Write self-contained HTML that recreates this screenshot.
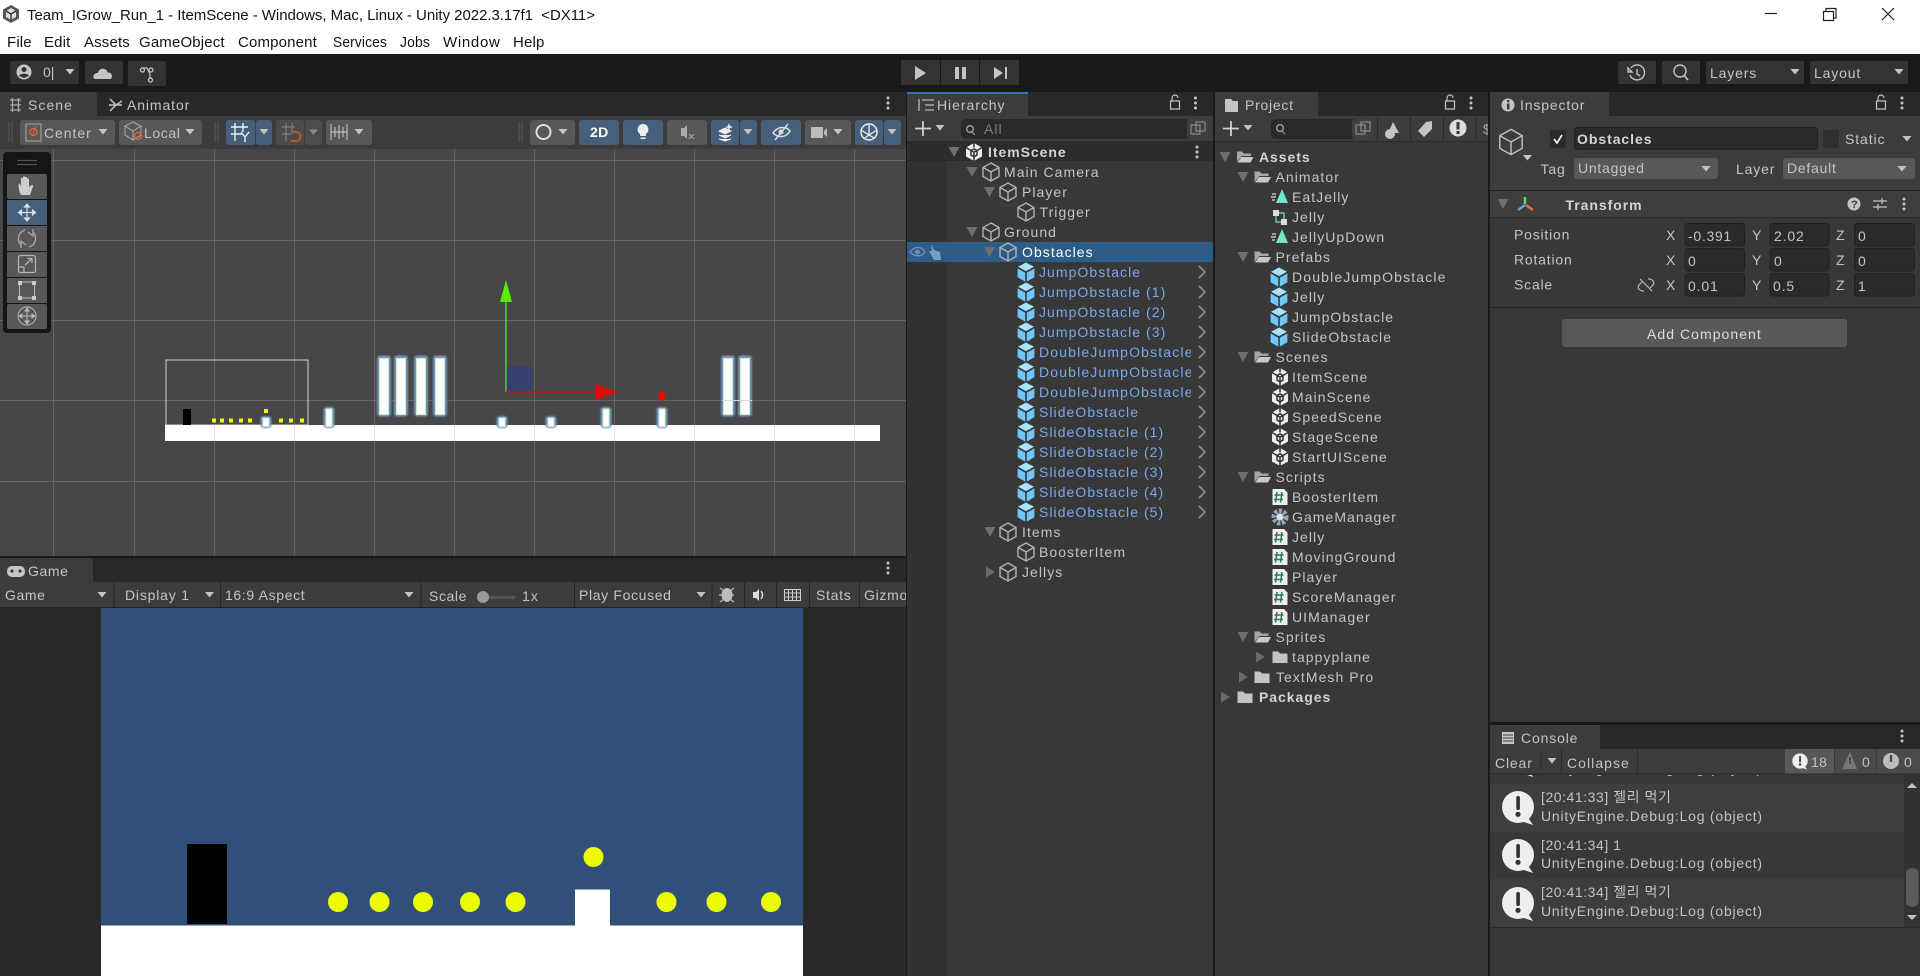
<!DOCTYPE html>
<html><head><meta charset="utf-8"><title>Unity</title>
<style>
html,body{margin:0;padding:0;background:#191919;overflow:hidden;width:1920px;height:976px}
svg{display:block}
text{font-family:"Liberation Sans","Noto Sans CJK KR",sans-serif;font-size:14px;letter-spacing:1.05px;fill:#c4c4c4;white-space:pre}
.b{font-weight:700;fill:#d4d4d4;letter-spacing:.95px}
.p{fill:#7ba7ee}
.w{fill:#fff}
.m{fill:#111;font-size:15px;letter-spacing:.15px}
.k{fill:#111;font-size:15px;letter-spacing:0}
.s{fill:#aaa}
.bn{fill:#585858}
.bl{fill:#46607c}
.sep{stroke:#2a2a2a;stroke-width:1}
.f{fill:#2a2a2a;stroke:#212121}
</style></head><body>
<svg width="1920" height="976" viewBox="0 0 1920 976" xmlns="http://www.w3.org/2000/svg">
<defs>
<path id="td" d="M-5.5-5H5.5L0 5Z" fill="#6f6f6f"/>
<path id="tr" d="M-4-5.5L5 0L-4 5.5Z" fill="#6a6a6a"/>
<path id="dd" d="M-4.5-3H4.5L0 2.5Z" fill="#c4c4c4"/>
<path id="cube" d="M0-9L8-4.5V4.5L0 9L-8 4.5V-4.5ZM-8-4.5L0 0L8-4.5M0 0V9" fill="none" stroke="#b4b4b4" stroke-width="1.4"/>
<g id="pc"><path d="M0-9.5L8-5.2L0-.9L-8-5.2Z" fill="#a9e2ff"/><path d="M-8.4-3.6L-.8.7V9.6L-8.4 5.3Z" fill="#6fc7fb"/><path d="M8.4-3.6L.8.7V9.6L8.4 5.3Z" fill="#6fc7fb"/></g>
<g id="sc"><path d="M0-9L8-4.5V4.5L0 9L-8 4.5V-4.5Z" fill="#ededed"/><path d="M-8-4.5L-3-1.5V3L0 5L3 3V-1.5L8-4.5M0-9V-4.5M-3-1.5L0-3.2L3-1.5L0 .2ZM0 .2V5M0 5V9" fill="none" stroke="#333" stroke-width="1.5"/></g>
<g id="fo"><path d="M-8-5.5H-3L-1-3.5H6V-1H-3L-8 5Z" fill="#a6a6a6"/><path d="M-3.5 0H8.5L5.5 5.5H-7.5Z" fill="#c8c8c8"/></g>
<path id="fc" d="M-7.5-5.5H-2L0-3.5H7.5V6H-7.5Z" fill="#c4c4c4"/>
<g id="sr"><path d="M-7.5-8H4L7.5-4.5V8H-7.5Z" fill="#eee"/><path d="M-3-5L-4.5 5.5M2-5L.5 5.5M-5.5-2H3.5M-6 2.5H3" stroke="#2d7d4a" stroke-width="1.5" fill="none"/></g>
<g id="an"><path d="M2-8L8 6H-4Z" fill="#6fe6cf"/><path d="M-8-3H-4M-9 0H-4M-8 3H-5" stroke="#ddd" stroke-width="1.2"/></g>
<g id="dk"><circle cy="-5" r="1.5" fill="#c4c4c4"/><circle r="1.5" fill="#c4c4c4"/><circle cy="5" r="1.5" fill="#c4c4c4"/></g>
<path id="lk" d="M-4.5-1V7H4.5V-1ZM-3-1V-4A3 3 0 0 1 3-4" fill="none" stroke="#c4c4c4" stroke-width="1.2"/>
<path id="gt" d="M-3-6L3 0L-3 6" fill="none" stroke="#8c8c8c" stroke-width="1.7"/>
<g id="bub"><circle r="16" fill="#eee"/><path d="M9 9L15 18L3 14Z" fill="#eee"/><rect x="-1.7" y="-11" width="3.6" height="14" rx="1.6" fill="#333"/><circle cy="7.3" r="2.6" fill="#333"/></g>
<clipPath id="hc"><rect x="1030" y="340" width="161" height="62"/></clipPath>
<clipPath id="gc"><rect x="0" y="582" width="906" height="26"/></clipPath>
<clipPath id="pc2"><rect x="1214" y="116" width="274" height="25"/></clipPath>
<clipPath id="cc"><rect x="1490" y="775" width="414" height="9"/></clipPath>
<filter id="gl" x="-40%" y="-20%" width="180%" height="140%"><feGaussianBlur stdDeviation=".7"/></filter>
</defs>

<!-- title -->
<rect width="1920" height="54" fill="#fff"/>
<g transform="translate(11,14)"><path d="M0-9L8-4.5V4.5L0 9L-8 4.5V-4.5Z" fill="#555"/><path d="M0-6L5-3V3L0 6L-5 3V-3Z" fill="#ddd"/><path d="M-5-3L0 0L5-3M0 0V6" stroke="#333" stroke-width="1.4" fill="none"/></g>
<text class="k" x="27" y="20" textLength="568" lengthAdjust="spacing">Team_IGrow_Run_1 - ItemScene - Windows, Mac, Linux - Unity 2022.3.17f1  &lt;DX11&gt;</text>
<text class="m" x="7" y="47">File</text><text class="m" x="44" y="47">Edit</text><text class="m" x="84" y="47">Assets</text><text class="m" x="139" y="47">GameObject</text><text class="m" x="238" y="47">Component</text><text class="m" x="333" y="47" textLength="54" lengthAdjust="spacingAndGlyphs">Services</text><text class="m" x="400" y="47" textLength="30" lengthAdjust="spacingAndGlyphs">Jobs</text><text class="m" x="443" y="47" textLength="57" lengthAdjust="spacing">Window</text><text class="m" x="513" y="47">Help</text>
<path d="M1765 13.5H1777" stroke="#222" stroke-width="1.2"/>
<path d="M1823.500 11.500H1833.500V20.500H1823.500ZM1826 11V8.500H1836V18H1834" fill="none" stroke="#222" stroke-width="1.2"/>
<path d="M1882 8L1894 20M1894 8L1882 20" stroke="#222" stroke-width="1.2"/>

<!-- top toolbar -->
<rect y="54" width="1920" height="38" fill="#191919"/>
<rect x="10" y="61" width="69" height="23" rx="2" fill="#333"/>
<circle cx="24" cy="72" r="7.500" fill="#c4c4c4"/><circle cx="24" cy="69.500" r="2.500" fill="#333"/><path d="M19 76C20 73 28 73 29 76L24 78Z" fill="#333"/>
<text x="43" y="77" style="letter-spacing:0">0|</text><use href="#dd" x="70" y="72"/>
<rect x="85" y="61" width="38" height="23" rx="2" fill="#333"/>
<path d="M96 79C91 79 94 72 98 73C99 67 107 68 107.500 72.500C113 72 113 79 110 79Z" fill="#c4c4c4"/>
<rect x="128" y="61" width="38" height="25" rx="2" fill="#333"/>
<path d="M141 68H147L150 74V79M142.500 68A2 2 0 1 1 142.400 68M151 68A2 2 0 1 1 150.900 68M150.500 78A2 2 0 1 1 150.400 78" fill="none" stroke="#c4c4c4" stroke-width="1.2"/>
<rect x="901" y="60" width="39" height="25" fill="#333"/><rect x="941" y="60" width="38" height="25" fill="#333"/><rect x="980" y="60" width="39" height="25" fill="#333"/>
<path d="M915 66L926 73L915 80Z" fill="#c4c4c4"/>
<path d="M955 67H959V79H955ZM962 67H966V79H962Z" fill="#c4c4c4"/>
<path d="M994 67L1003 73L994 79ZM1005 67H1007V79H1005Z" fill="#c4c4c4"/>
<rect x="1618" y="61" width="38" height="23" rx="2" fill="#333"/>
<path d="M1631 68A7.500 7.500 0 1 1 1630 75M1628 68L1632 72H1628ZM1637 69V74L1640 76" fill="none" stroke="#c4c4c4" stroke-width="1.4"/>
<rect x="1662" y="61" width="38" height="23" rx="2" fill="#333"/>
<circle cx="1680" cy="71" r="6" fill="none" stroke="#c4c4c4" stroke-width="1.4"/><path d="M1684 75L1688 80" stroke="#c4c4c4" stroke-width="1.6"/>
<rect x="1706" y="61" width="98" height="23" rx="2" fill="#333"/><text x="1710" y="78" style="letter-spacing:.85px">Layers</text><use href="#dd" x="1795" y="72"/>
<rect x="1810" y="61" width="98" height="23" rx="2" fill="#333"/><text x="1814" y="78" style="letter-spacing:.85px">Layout</text><use href="#dd" x="1899" y="72"/>

<!-- scene panel -->
<rect y="92" width="906" height="24" fill="#282828"/>
<path d="M0 116V92H94Q97 92 97 95V116Z" fill="#3c3c3c"/>
<path d="M10 100H21M10 105H21M10 110H21M12.500 98V112M18.500 98V112" stroke="#aaa" stroke-width="1.2"/>
<text x="28" y="110">Scene</text>
<path d="M110 99L116 105L110 111M109 105H122M116 105L122 101" fill="none" stroke="#c4c4c4" stroke-width="1.5"/>
<text x="127" y="110" style="letter-spacing:.9px">Animator</text>
<use href="#dk" x="888" y="103"/>
<rect y="116" width="906" height="33" fill="#3c3c3c"/>
<path d="M9 122V142M12 122V142M215 122V142M218 122V142M519 122V142M522 122V142" stroke="#555" stroke-width="1.200"/>
<rect x="20" y="120" width="95" height="25" rx="3" class="bn"/>
<rect x="26" y="124" width="15" height="17" fill="none" stroke="#aaa"/><circle cx="33.500" cy="132" r="3.500" fill="none" stroke="#e0603a" stroke-width="1.500"/><path d="M36 126L32 136" stroke="#e0603a"/>
<text x="44" y="138" style="letter-spacing:.95px">Center</text><use href="#dd" x="103" y="132"/>
<rect x="119" y="120" width="83" height="25" rx="3" class="bn"/>
<path d="M133 122L141 126V135L133 140L125 135V126ZM125 126L133 131L141 126M133 131V140" fill="none" stroke="#aaa"/><circle cx="138" cy="136" r="3.500" fill="none" stroke="#e0603a" stroke-width="1.500"/>
<text x="144" y="138" style="letter-spacing:.6px">Local</text><use href="#dd" x="190" y="132"/>
<rect x="226" y="120" width="29" height="25" rx="3" class="bl"/><rect x="256" y="120" width="16" height="25" rx="3" class="bl"/>
<path d="M231 127H248M231 134H243M235 123V141M243 123V132M241 132L245 137L249 132M245 137V142" fill="none" stroke="#eee" stroke-width="1.400"/><use href="#dd" x="264" y="132"/>
<rect x="276" y="120" width="28" height="25" rx="3" fill="#4c4c4c"/><rect x="305" y="120" width="17" height="25" rx="3" fill="#4c4c4c"/>
<path d="M282 127H295M282 134H292M286 123V141M292 123V132" fill="none" stroke="#888"/><path d="M292 132H296A4 4 0 0 1 296 141H291" fill="none" stroke="#b5552d" stroke-width="2"/><path d="M309 129.500H318L313.500 135Z" fill="#888"/>
<rect x="326" y="120" width="46" height="25" rx="3" class="bn"/>
<path d="M331 124V140M347 124V140M331 132H347M335 127V137M339 125V139M343 127V137" fill="none" stroke="#ccc"/><use href="#dd" x="359" y="132"/>
<rect x="530" y="120" width="45" height="25" rx="3" class="bn"/><circle cx="543.500" cy="132" r="7" fill="none" stroke="#ddd" stroke-width="2"/><use href="#dd" x="563" y="132"/>
<rect x="579" y="120" width="40" height="25" rx="3" class="bl"/><text class="w" x="590" y="137" style="font-weight:700;letter-spacing:.3px">2D</text>
<rect x="623" y="120" width="40" height="25" rx="3" class="bl"/><path d="M643 124A5.500 5.500 0 0 1 646 134V136H640V134A5.500 5.500 0 0 1 643 124ZM640.500 137.500H645.500V139H640.500Z" fill="#eee"/>
<rect x="667" y="120" width="40" height="25" rx="3" class="bn"/><path d="M681 128H684L687 125V139L684 136H681Z" fill="#aaa"/><path d="M689 134L694 139M694 134L689 139" stroke="#aaa"/>
<rect x="711" y="120" width="28" height="25" rx="3" class="bl"/><rect x="740" y="120" width="17" height="25" rx="3" class="bl"/>
<path d="M719 131L725 134L731 131L725 128ZM719 135L725 138L731 135M719 139L725 141L731 139" fill="#eee" stroke="#eee"/><path d="M729 123L730 126L733 127L730 128L729 131L728 128L725 127L728 126Z" fill="#eee"/><use href="#dd" x="748" y="132"/>
<rect x="761" y="120" width="40" height="25" rx="3" class="bl"/><path d="M773 133C778 126 786 126 790 131C786 138 778 138 773 133ZM775 140L788 124" fill="none" stroke="#ddd" stroke-width="1.500"/><circle cx="781" cy="132" r="2.500" fill="#ddd"/>
<rect x="805" y="120" width="46" height="25" rx="3" class="bn"/><path d="M811 127H823V138H811ZM824 131L827 128V137L824 134Z" fill="#bbb"/><use href="#dd" x="838" y="132"/>
<rect x="855" y="120" width="28" height="25" rx="3" class="bl"/><rect x="884" y="120" width="17" height="25" rx="3" class="bl"/>
<circle cx="869" cy="132" r="8" fill="none" stroke="#eee" stroke-width="1.500"/><path d="M861 130L869 135L877 130M869 124V135M865 138L869 135L874 138" fill="none" stroke="#eee" stroke-width="1.300"/><use href="#dd" x="892" y="132"/>

<!-- scene view -->
<rect y="149" width="906" height="407" fill="#474747"/>
<path d="M53.500 149V556M134.500 149V556M214.500 149V556M294.500 149V556M374.500 149V556M454.500 149V556M534.500 149V556M614.500 149V556M694.500 149V556M774.500 149V556M854.500 149V556M0 160.500H906M0 240.500H906M0 320.500H906M0 400.500H906M0 481.500H906" stroke="#646464"/>
<rect x="166" y="360" width="142" height="65" fill="none" stroke="#d2d2d2"/>
<rect x="165" y="425" width="715" height="16" fill="#fff"/>
<path d="M214.500 425V441M294.500 425V441M374.500 425V441M454.500 425V441M534.500 425V441M614.500 425V441M694.500 425V441M774.500 425V441M854.500 425V441" stroke="#e2e2e2"/>
<rect x="183" y="409" width="8" height="16" fill="#000"/>
<g fill="#f5f500"><rect x="212" y="418.500" width="4" height="4"/><rect x="220" y="418.500" width="4" height="4"/><rect x="229" y="418.500" width="4" height="4"/><rect x="239" y="418.500" width="4" height="4"/><rect x="248" y="418.500" width="4" height="4"/><rect x="264" y="409" width="4" height="4"/><rect x="279" y="418.500" width="4" height="4"/><rect x="289" y="418.500" width="4" height="4"/><rect x="300" y="418.500" width="4" height="4"/></g>
<g fill="#6f94bd" filter="url(#gl)">
<rect x="377" y="355.500" width="14" height="61" rx="3"/><rect x="394" y="355.500" width="14" height="61" rx="3"/><rect x="414" y="355.500" width="14" height="61" rx="3"/><rect x="433" y="355.500" width="14" height="61" rx="3"/><rect x="721" y="355.500" width="14" height="61" rx="3"/><rect x="738" y="355.500" width="14" height="61" rx="3"/>
<rect x="260.500" y="416" width="11" height="12" rx="3"/><rect x="496.500" y="416" width="11" height="12" rx="3"/><rect x="545.500" y="416" width="11" height="12" rx="3"/>
<rect x="323.500" y="407" width="11" height="21" rx="3"/><rect x="600.500" y="407" width="11" height="21" rx="3"/><rect x="656.500" y="407" width="11" height="21" rx="3"/>
</g>
<g fill="#fff" stroke="#cdeccb">
<rect x="379.500" y="358.500" width="9" height="56"/><rect x="396.500" y="358.500" width="9" height="56"/><rect x="416.500" y="358.500" width="9" height="56"/><rect x="435.500" y="358.500" width="9" height="56"/><rect x="723.500" y="358.500" width="9" height="56"/><rect x="740.500" y="358.500" width="9" height="56"/>
<rect x="263" y="418" width="6" height="8.500"/><rect x="499" y="418" width="6" height="8.500"/><rect x="548" y="418" width="6" height="8.500"/>
<rect x="326" y="409" width="6" height="17.500"/><rect x="603" y="409" width="6" height="17.500"/><rect x="659" y="409" width="6" height="17.500"/>
</g>
<path d="M722 400.500H752" stroke="#d8d8d8"/>
<rect x="507" y="367" width="24" height="25" fill="#3b3f6e" stroke="#2a3a9a"/>
<path d="M506 300V392" stroke="#4fd60f" stroke-width="1.500"/><path d="M506 280L500 302H512Z" fill="#55f000"/>
<path d="M506 392H598" stroke="#a32020" stroke-width="2"/><path d="M596 384L618 392L596 400Z" fill="#d80e0e"/>
<ellipse cx="662" cy="396" rx="3.500" ry="4.500" fill="#f00"/>

<!-- tool palette -->
<rect x="3" y="152" width="48" height="181" rx="4" fill="#151515"/>
<path d="M17 160.500H37M17 164.500H37" stroke="#555" stroke-width="1.300"/>
<rect x="7" y="174" width="40" height="25" rx="2" class="bn"/>
<rect x="7" y="200" width="40" height="25" fill="#46607c"/>
<rect x="7" y="226" width="40" height="25" class="bn"/>
<rect x="7" y="252" width="40" height="25" class="bn"/>
<rect x="7" y="278" width="40" height="25" class="bn"/>
<rect x="7" y="304" width="40" height="25" rx="2" class="bn"/>
<path d="M21 195C18 190 19 186 18.500 184L19.500 183.500L21 186V178L23 178V185V176.500L25 176.500V185V177L27 177V185V178.500L29 178.500V187C33 184 33.500 185 33 186.500L30 195Z" fill="#ccc"/>
<path d="M27 204V221M18.500 212.500H35.500M27 204L24.500 207H29.500ZM27 221L24.500 218H29.500ZM18.500 212.500L21.500 210V215ZM35.500 212.500L32.500 210V215Z" fill="#ddd" stroke="#ddd" stroke-width="1.200"/>
<path d="M21 245A9 9 0 0 1 25 230M33 232A9 9 0 0 1 29 247M33 229L33 236L28 232M21 248L21 241L26 245" fill="none" stroke="#aaa" stroke-width="1.300"/>
<rect x="18.500" y="255.500" width="17" height="17" rx="2" fill="none" stroke="#b5b5b5" stroke-width="1.200"/><path d="M18.500 267H24V272.500M25 265L32 258.500M27.500 258.500H32V263" fill="none" stroke="#b5b5b5" stroke-width="1.200"/>
<path d="M19.500 282H34.500V298H19.500Z" fill="none" stroke="#bbb"/><g fill="#ccc"><rect x="18" y="281" width="4" height="4"/><rect x="32" y="281" width="4" height="4"/><rect x="18" y="296" width="4" height="4"/><rect x="32" y="296" width="4" height="4"/></g>
<circle cx="27" cy="316" r="9" fill="none" stroke="#aaa" stroke-width="1.200"/><path d="M27 308V324M19 316H35M27 308L25 311H29ZM27 324L25 321H29ZM19 316L22 314V318ZM35 316L32 314V318Z" fill="#bbb" stroke="#bbb"/>

<!-- game panel -->
<rect y="558" width="906" height="24" fill="#282828"/>
<path d="M0 582V558H90Q93 558 93 561V582Z" fill="#3c3c3c"/>
<rect x="7" y="566" width="18" height="11" rx="5" fill="#c4c4c4"/><circle cx="12" cy="571" r="1.600" fill="#3c3c3c"/><circle cx="20" cy="571" r="1.600" fill="#3c3c3c"/>
<text x="28" y="576" style="letter-spacing:.6px">Game</text>
<use href="#dk" x="888" y="568"/>
<rect y="582" width="906" height="26" fill="#3c3c3c"/>
<path d="M114 582V608M220.500 582V608M421 582V608M574.500 582V608M712 582V608M744.500 582V608M776.500 582V608M809.500 582V608M859.500 582V608M0 607.500H906" stroke="#252525"/>
<g clip-path="url(#gc)">
<text x="5" y="600" style="letter-spacing:.6px">Game</text><use href="#dd" x="102" y="595"/>
<text x="125" y="600" style="letter-spacing:.8px">Display 1</text><use href="#dd" x="209.500" y="595"/>
<text x="225" y="600" style="letter-spacing:.65px">16:9 Aspect</text><use href="#dd" x="409" y="595"/>
<text x="429" y="601" style="letter-spacing:.6px">Scale</text><rect x="483" y="596" width="32" height="3" fill="#555"/><circle cx="483" cy="597" r="6" fill="#999"/><text x="522" y="601">1x</text>
<text x="579" y="600" style="letter-spacing:.65px">Play Focused</text><use href="#dd" x="701" y="595"/>
<ellipse cx="727" cy="595" rx="5.500" ry="7" fill="#bbb"/><path d="M720 588L724 591M734 588L730 591M719 595H734M720 602L724 599M734 602L730 599" stroke="#bbb" stroke-width="1.200" fill="none"/>
<path d="M753 592H756L759 589V601L756 598H753Z" fill="#ddd"/><path d="M761 591A6 6 0 0 1 761 599" fill="none" stroke="#ddd" stroke-width="1.400"/>
<path d="M784.500 589.500H800.500V600.500H784.500ZM784.500 593H800.500M784.500 597H800.500M788.500 589.500V600.500M792.500 589.500V600.500M796.500 589.500V600.500" fill="none" stroke="#ccc"/>
<text x="816" y="600" style="letter-spacing:.7px">Stats</text><text x="864" y="600" style="letter-spacing:.7px">Gizmos</text>
</g>
<rect y="608" width="906" height="368" fill="#282828"/>
<rect x="101" y="608" width="702" height="368" fill="#304f79"/>
<rect x="101" y="925" width="702" height="51" fill="#fff"/><rect x="101" y="925" width="702" height="1" fill="#92a3bd"/>
<rect x="187" y="844" width="40" height="80" fill="#000"/>
<rect x="575" y="889" width="35" height="37" fill="#fff"/><rect x="575" y="889" width="35" height="1" fill="#92a3bd"/>
<g fill="#ebff00"><circle cx="338" cy="902" r="10"/><circle cx="379.500" cy="902" r="10"/><circle cx="423" cy="902" r="10"/><circle cx="470" cy="902" r="10"/><circle cx="515.500" cy="902" r="10"/><circle cx="666.500" cy="902" r="10"/><circle cx="716.500" cy="902" r="10"/><circle cx="771" cy="902" r="10"/><circle cx="593.500" cy="857" r="10"/></g>

<!-- hierarchy -->
<rect x="907" y="92" width="306" height="884" fill="#383838"/>
<rect x="907" y="92" width="306" height="24" fill="#282828"/>
<rect x="907" y="92" width="121" height="24" fill="#3c3c3c"/><rect x="907" y="92" width="121" height="2" fill="#3a72b0"/>
<path d="M922 100H934M925 105H934M925 110H934M919 99V111" stroke="#bbb" stroke-width="1.300" fill="none"/>
<text x="937" y="110" style="letter-spacing:.95px">Hierarchy</text>
<use href="#lk" x="1175" y="102"/><use href="#dk" x="1195.500" y="103"/>
<rect x="907" y="116" width="306" height="25" fill="#3c3c3c"/>
<path d="M923 121V136M915 128.500H931" stroke="#d0d0d0" stroke-width="1.800"/><use href="#dd" x="940" y="128"/>
<rect x="961" y="119" width="247" height="20" rx="5" fill="#2a2a2a"/>
<rect x="1187" y="119" width="21" height="20" rx="3" fill="#3f3f3f"/>
<rect x="1191" y="125" width="9" height="9" fill="none" stroke="#999"/><rect x="1196" y="122" width="9" height="9" fill="none" stroke="#999"/>
<circle cx="970" cy="129" r="3.300" fill="none" stroke="#aaa" stroke-width="1.300"/><path d="M972 132L975 135" stroke="#aaa"/>
<text class="s" x="984" y="134" style="fill:#7f7f7f">All</text>
<rect x="907" y="141" width="40" height="835" fill="#323232"/>
<rect x="907" y="141" width="306" height="20" fill="#2c2c2c"/>
<use href="#td" x="954" y="152"/><use href="#sc" x="974" y="152"/>
<text class="b" x="988" y="157">ItemScene</text><use href="#dk" x="1197" y="152"/>
<use href="#td" x="972" y="172"/><use href="#cube" x="991" y="172"/><text x="1004" y="177">Main Camera</text>
<use href="#td" x="989.500" y="192"/><use href="#cube" x="1008" y="192"/><text x="1022" y="197">Player</text>
<use href="#cube" x="1026" y="212"/><text x="1039.500" y="217">Trigger</text>
<use href="#td" x="972" y="232"/><use href="#cube" x="991" y="232"/><text x="1004" y="237">Ground</text>
<rect x="907" y="242" width="306" height="20" fill="#2c5d87"/>
<path d="M910 252C914 246 922 246 925 252C922 257 914 257 910 252Z" fill="none" stroke="#6c8eb0" stroke-width="1.500"/><circle cx="917.500" cy="252" r="2.500" fill="#6c8eb0"/>
<path d="M931 244L934 250L940 252L941 260H934L929 251L932 251Z" fill="#7d9cbc"/>
<use href="#td" x="989.500" y="252"/><use href="#cube" x="1008" y="252"/><text class="w" x="1022" y="257">Obstacles</text>
<use href="#pc" x="1026" y="272"/><text class="p" x="1039" y="277">JumpObstacle</text><use href="#gt" x="1202" y="272"/>
<use href="#pc" x="1026" y="292"/><text class="p" x="1039" y="297">JumpObstacle (1)</text><use href="#gt" x="1202" y="292"/>
<use href="#pc" x="1026" y="312"/><text class="p" x="1039" y="317">JumpObstacle (2)</text><use href="#gt" x="1202" y="312"/>
<use href="#pc" x="1026" y="332"/><text class="p" x="1039" y="337">JumpObstacle (3)</text><use href="#gt" x="1202" y="332"/>
<use href="#pc" x="1026" y="352"/><use href="#gt" x="1202" y="352"/>
<use href="#pc" x="1026" y="372"/><use href="#gt" x="1202" y="372"/>
<use href="#pc" x="1026" y="392"/><use href="#gt" x="1202" y="392"/>
<g clip-path="url(#hc)"><text class="p" x="1039" y="357" style="letter-spacing:1.15px">DoubleJumpObstacle</text><text class="p" x="1039" y="377" style="letter-spacing:1.15px">DoubleJumpObstacle</text><text class="p" x="1039" y="397" style="letter-spacing:1.15px">DoubleJumpObstacle</text></g>
<use href="#pc" x="1026" y="412"/><text class="p" x="1039" y="417">SlideObstacle</text><use href="#gt" x="1202" y="412"/>
<use href="#pc" x="1026" y="432"/><text class="p" x="1039" y="437">SlideObstacle (1)</text><use href="#gt" x="1202" y="432"/>
<use href="#pc" x="1026" y="452"/><text class="p" x="1039" y="457">SlideObstacle (2)</text><use href="#gt" x="1202" y="452"/>
<use href="#pc" x="1026" y="472"/><text class="p" x="1039" y="477">SlideObstacle (3)</text><use href="#gt" x="1202" y="472"/>
<use href="#pc" x="1026" y="492"/><text class="p" x="1039" y="497">SlideObstacle (4)</text><use href="#gt" x="1202" y="492"/>
<use href="#pc" x="1026" y="512"/><text class="p" x="1039" y="517">SlideObstacle (5)</text><use href="#gt" x="1202" y="512"/>
<use href="#td" x="990" y="532"/><use href="#cube" x="1008" y="532"/><text x="1022" y="537">Items</text>
<use href="#cube" x="1026" y="552"/><text x="1039" y="557">BoosterItem</text>
<use href="#tr" x="990" y="572"/><use href="#cube" x="1008" y="572"/><text x="1022" y="577">Jellys</text>

<!-- project -->
<rect x="1215" y="92" width="273" height="884" fill="#383838"/>
<rect x="1215" y="92" width="273" height="24" fill="#282828"/>
<rect x="1215" y="92" width="103" height="24" fill="#3c3c3c"/>
<path d="M1225 99H1231L1233 101H1238V112H1225Z" fill="#c4c4c4"/>
<text x="1245" y="110" style="letter-spacing:.75px">Project</text>
<use href="#lk" x="1450" y="102"/><use href="#dk" x="1471" y="103"/>
<rect x="1215" y="116" width="273" height="25" fill="#3c3c3c"/>
<path d="M1231 121V136M1223 128.500H1239" stroke="#d0d0d0" stroke-width="1.800"/><use href="#dd" x="1248" y="128"/>
<rect x="1271" y="119" width="102" height="20" rx="5" fill="#2a2a2a"/><rect x="1352" y="119" width="21" height="20" rx="3" fill="#3f3f3f"/>
<rect x="1356" y="125" width="9" height="9" fill="none" stroke="#999"/><rect x="1361" y="122" width="9" height="9" fill="none" stroke="#999"/>
<circle cx="1280" cy="128" r="3.300" fill="none" stroke="#aaa" stroke-width="1.300"/><path d="M1282 131L1285 134" stroke="#aaa"/>
<path d="M1377.500 116V141M1410.500 116V141M1443.500 116V141M1476 116V141M1215 141.500H1488" stroke="#2a2a2a"/>
<circle cx="1390" cy="134" r="5" fill="#c4c4c4"/><path d="M1393 122L1399 133H1388Z" fill="#c4c4c4"/>
<path d="M1432 121V129L1424 137L1418 131L1426 122Z" fill="#c4c4c4"/>
<circle cx="1458" cy="128" r="8.500" fill="#ddd"/><rect x="1456.500" y="122" width="3" height="7.500" fill="#383838"/><rect x="1456.500" y="131" width="3" height="3" fill="#383838"/>
<g clip-path="url(#pc2)"><text x="1483" y="134" class="s">$</text></g>
<use href="#td" x="1225" y="157"/><use href="#fo" x="1245" y="157"/><text class="b" x="1259" y="162">Assets</text>
<use href="#td" x="1243" y="177"/><use href="#fo" x="1262.500" y="177"/><text x="1275.500" y="182">Animator</text>
<use href="#an" x="1280" y="197"/><text x="1292" y="202">EatJelly</text>
<g><rect x="1273" y="210" width="6" height="6" fill="#ddd"/><rect x="1281" y="219" width="6" height="6" fill="#ddd"/><path d="M1279 213H1284V219M1276 216V222H1281" fill="none" stroke="#6fe6cf" stroke-width="1.200"/></g><text x="1292" y="222">Jelly</text>
<use href="#an" x="1280" y="237"/><text x="1292" y="242">JellyUpDown</text>
<use href="#td" x="1243" y="257"/><use href="#fo" x="1262.500" y="257"/><text x="1275.500" y="262">Prefabs</text>
<use href="#pc" x="1279" y="277"/><text x="1292" y="282" style="letter-spacing:1.15px">DoubleJumpObstacle</text>
<use href="#pc" x="1279" y="297"/><text x="1292" y="302">Jelly</text>
<use href="#pc" x="1279" y="317"/><text x="1292" y="322">JumpObstacle</text>
<use href="#pc" x="1279" y="337"/><text x="1292" y="342">SlideObstacle</text>
<use href="#td" x="1243" y="357"/><use href="#fo" x="1262.500" y="357"/><text x="1275.500" y="362">Scenes</text>
<use href="#sc" x="1280" y="377"/><text x="1292" y="382">ItemScene</text>
<use href="#sc" x="1280" y="397"/><text x="1292" y="402">MainScene</text>
<use href="#sc" x="1280" y="417"/><text x="1292" y="422">SpeedScene</text>
<use href="#sc" x="1280" y="437"/><text x="1292" y="442">StageScene</text>
<use href="#sc" x="1280" y="457"/><text x="1292" y="462">StartUIScene</text>
<use href="#td" x="1243" y="477"/><use href="#fo" x="1262.500" y="477"/><text x="1275.500" y="482">Scripts</text>
<use href="#sr" x="1280" y="497"/><text x="1292" y="502">BoosterItem</text>
<circle cx="1280" cy="517" r="6" fill="none" stroke="#9aa3bd" stroke-width="5" stroke-dasharray="3 1.500"/><circle cx="1280" cy="517" r="3.500" fill="#dbe0ee"/><text x="1292" y="522">GameManager</text>
<use href="#sr" x="1280" y="537"/><text x="1292" y="542">Jelly</text>
<use href="#sr" x="1280" y="557"/><text x="1292" y="562">MovingGround</text>
<use href="#sr" x="1280" y="577"/><text x="1292" y="582">Player</text>
<use href="#sr" x="1280" y="597"/><text x="1292" y="602">ScoreManager</text>
<use href="#sr" x="1280" y="617"/><text x="1292" y="622">UIManager</text>
<use href="#td" x="1243" y="637"/><use href="#fo" x="1262.500" y="637"/><text x="1275.500" y="642">Sprites</text>
<use href="#tr" x="1260" y="657"/><use href="#fc" x="1280" y="657"/><text x="1292" y="662">tappyplane</text>
<use href="#tr" x="1243" y="677"/><use href="#fc" x="1262" y="677"/><text x="1276" y="682">TextMesh Pro</text>
<use href="#tr" x="1225" y="697"/><use href="#fc" x="1245" y="697"/><text class="b" x="1259" y="702">Packages</text>

<!-- inspector -->
<rect x="1490" y="92" width="430" height="630" fill="#383838"/>
<rect x="1490" y="92" width="430" height="24" fill="#282828"/>
<rect x="1490" y="92" width="119" height="24" fill="#3c3c3c"/>
<circle cx="1508" cy="105" r="6.500" fill="#c4c4c4"/><rect x="1507" y="103.500" width="2.400" height="6" fill="#3c3c3c"/><rect x="1507" y="100" width="2.400" height="2.200" fill="#3c3c3c"/>
<text x="1520" y="110" style="letter-spacing:.85px">Inspector</text>
<use href="#lk" x="1881" y="102"/><use href="#dk" x="1902" y="103"/>
<rect x="1490" y="116" width="430" height="74" fill="#3c3c3c"/>
<g transform="translate(1511,142) scale(1.400)"><path d="M0-9L8-4.500V4.500L0 9L-8 4.500V-4.500ZM-8-4.500L0 0L8-4.500M0 0V9" fill="none" stroke="#c4c4c4" stroke-width="1"/></g>
<use href="#dd" x="1527.500" y="158"/>
<rect x="1550" y="130" width="16" height="18" rx="2" fill="#2a2a2a"/><path d="M1554 139L1557 143L1562 135" fill="none" stroke="#eee" stroke-width="1.700"/>
<rect x="1574.500" y="127.500" width="243" height="22" rx="3" class="f"/><text class="b" x="1577" y="144">Obstacles</text>
<rect x="1823" y="130" width="16" height="18" rx="2" fill="#2f2f2f"/>
<text x="1845" y="144" style="letter-spacing:.9px">Static</text><use href="#dd" x="1907" y="139"/>
<text x="1540.500" y="174" style="letter-spacing:.85px">Tag</text>
<rect x="1574" y="158" width="144" height="21" rx="3" class="bn"/><text x="1578" y="173" style="letter-spacing:.75px">Untagged</text><use href="#dd" x="1706" y="169"/>
<text x="1736" y="174" style="letter-spacing:.85px">Layer</text>
<rect x="1783" y="158" width="132" height="21" rx="3" class="bn"/><text x="1787" y="173" style="letter-spacing:.75px">Default</text><use href="#dd" x="1902" y="169"/>
<rect x="1490" y="190" width="430" height="1" fill="#222"/>
<rect x="1490" y="191" width="430" height="26" fill="#3e3e3e"/>
<rect x="1490" y="217" width="430" height="1" fill="#2a2a2a"/>
<use href="#td" x="1503" y="204"/>
<path d="M1525 197V204" stroke="#5be05b" stroke-width="2.400"/><path d="M1525 205L1518 210" stroke="#58a6e8" stroke-width="2.600"/><path d="M1526 205L1533 210" stroke="#e86a3a" stroke-width="2.600"/>
<text class="b" x="1565.500" y="210">Transform</text>
<circle cx="1854" cy="204" r="6.500" fill="#c4c4c4"/><text x="1851" y="208" style="font-size:11px;font-weight:700;letter-spacing:0;fill:#3e3e3e">?</text>
<path d="M1873 201H1887M1873 207H1887M1882 198V204M1878 204V210" stroke="#c4c4c4" stroke-width="1.200"/>
<use href="#dk" x="1904" y="204"/>
<text x="1514" y="239.500" style="letter-spacing:.8px">Position</text>
<text x="1514" y="264.500" style="letter-spacing:.8px">Rotation</text>
<text x="1514" y="289.500" style="letter-spacing:.8px">Scale</text>
<path d="M1640 279L1652 291M1642 282L1639 285Q1637 288 1640 290L1642 291H1644M1650 288L1653 285Q1655 282 1652 280L1650 279H1648" fill="none" stroke="#bbb" stroke-width="1.200"/>
<text x="1666" y="240">X</text><text x="1666" y="265">X</text><text x="1666" y="290">X</text>
<text x="1752" y="240">Y</text><text x="1752" y="265">Y</text><text x="1752" y="290">Y</text>
<text x="1836" y="240">Z</text><text x="1836" y="265">Z</text><text x="1836" y="290">Z</text>
<g class="f"><rect x="1685" y="223.500" width="59.500" height="22.500" rx="3" class="f"/><rect x="1770" y="223.500" width="59" height="22.500" rx="3" class="f"/><rect x="1854.500" y="223.500" width="60" height="22.500" rx="3" class="f"/>
<rect x="1685" y="248.500" width="59.500" height="22.500" rx="3" class="f"/><rect x="1770" y="248.500" width="59" height="22.500" rx="3" class="f"/><rect x="1854.500" y="248.500" width="60" height="22.500" rx="3" class="f"/>
<rect x="1685" y="273.500" width="59.500" height="22.500" rx="3" class="f"/><rect x="1770" y="273.500" width="59" height="22.500" rx="3" class="f"/><rect x="1854.500" y="273.500" width="60" height="22.500" rx="3" class="f"/></g>
<text x="1688" y="241" style="letter-spacing:.7px">-0.391</text><text x="1774" y="241" style="letter-spacing:.85px">2.02</text><text x="1858" y="241">0</text>
<text x="1688" y="266">0</text><text x="1774" y="266">0</text><text x="1858" y="266">0</text>
<text x="1688" y="291" style="letter-spacing:.85px">0.01</text><text x="1773" y="291" style="letter-spacing:.85px">0.5</text><text x="1858" y="291">1</text>
<rect x="1490" y="307" width="430" height="1" fill="#222"/>
<rect x="1562" y="319" width="285" height="28" rx="3" class="bn"/>
<text x="1647" y="339" style="fill:#dcdcdc;letter-spacing:1.05px">Add Component</text>

<!-- console -->
<rect x="1490" y="725" width="430" height="251" fill="#383838"/>
<rect x="1490" y="725" width="430" height="24" fill="#282828"/>
<rect x="1490" y="725" width="110" height="24" fill="#3c3c3c"/>
<path d="M1502 732H1514V744H1502Z" fill="#c4c4c4"/><path d="M1503 735H1513M1503 738H1513M1503 741H1513" stroke="#3c3c3c"/>
<text x="1521" y="743" style="letter-spacing:.85px">Console</text>
<use href="#dk" x="1902" y="736"/>
<rect x="1490" y="749" width="430" height="25" fill="#3c3c3c"/>
<rect x="1785" y="749" width="49" height="25" fill="#585858"/><rect x="1835" y="749" width="41" height="25" fill="#4a4a4a"/><rect x="1877" y="749" width="43" height="25" fill="#4a4a4a"/>
<path d="M1541 753V769M1561.500 749V774M1637.500 749V774M1490 774H1920" stroke="#2a2a2a"/>
<text x="1495" y="768" style="letter-spacing:.85px">Clear</text><use href="#dd" x="1552" y="761"/><text x="1567" y="768">Collapse</text>
<g transform="translate(1800,761) scale(.48)"><use href="#bub"/></g><text x="1811" y="767" style="letter-spacing:.4px">18</text>
<path d="M1850 752L1857 769H1842Z" fill="#777"/><rect x="1849" y="757" width="2" height="7" fill="#4a4a4a"/><text x="1862" y="767">0</text>
<circle cx="1891" cy="761" r="8" fill="#bbb"/><rect x="1889.800" y="755" width="2.400" height="7" fill="#4a4a4a"/><text x="1904" y="767">0</text>
<rect x="1490" y="775" width="414" height="9" fill="#383838"/>
<g clip-path="url(#cc)"><use href="#bub" x="1518" y="759"/><text x="1541" y="773" style="letter-spacing:.75px">UnityEngine.Debug:Log (object)</text></g>
<rect x="1490" y="784" width="414" height="48" fill="#3e3e3e"/>
<rect x="1490" y="832" width="414" height="47" fill="#383838"/>
<rect x="1490" y="879" width="414" height="48" fill="#3e3e3e"/>
<rect x="1904" y="775" width="16" height="152" fill="#323232"/>
<rect x="1906" y="868" width="12.500" height="39" rx="6" fill="#5c5c5c"/>
<path d="M1907 788H1917L1912 783Z" fill="#c4c4c4"/><path d="M1907 915H1917L1912 920Z" fill="#c4c4c4"/>
<rect x="1490" y="927" width="430" height="1" fill="#2a2a2a"/>
<use href="#bub" x="1518" y="807"/><use href="#bub" x="1518" y="855"/><use href="#bub" x="1518" y="903"/>
<text x="1541" y="802" style="letter-spacing:.55px">[20:41:33] 젤리 먹기</text>
<text x="1541" y="821" style="letter-spacing:.78px">UnityEngine.Debug:Log (object)</text>
<text x="1541" y="850" style="letter-spacing:.55px">[20:41:34] 1</text>
<text x="1541" y="868" style="letter-spacing:.78px">UnityEngine.Debug:Log (object)</text>
<text x="1541" y="897" style="letter-spacing:.55px">[20:41:34] 젤리 먹기</text>
<text x="1541" y="916" style="letter-spacing:.78px">UnityEngine.Debug:Log (object)</text>
</svg>
</body></html>
